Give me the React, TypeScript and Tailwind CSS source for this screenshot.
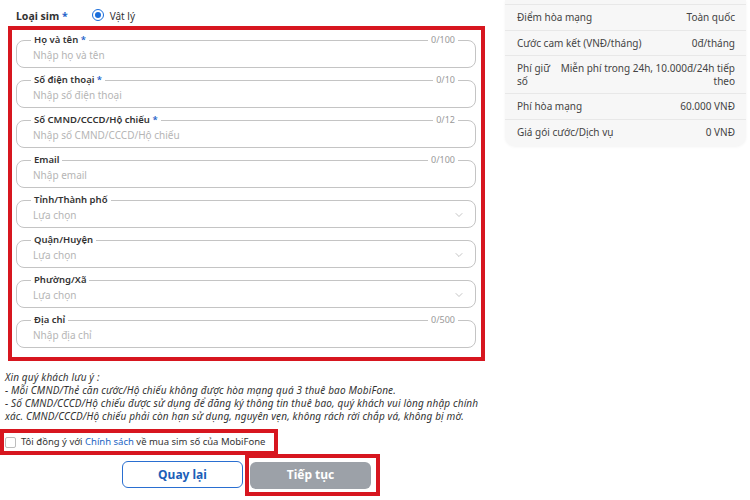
import { ChevronDown } from "lucide-react";

type Field = {
  label: string;
  required?: boolean;
  placeholder: string;
  counter?: string;
  select?: boolean;
};

const fields: Field[] = [
  { label: "Họ và tên", required: true, placeholder: "Nhập họ và tên", counter: "0/100" },
  { label: "Số điện thoại", required: true, placeholder: "Nhập số điện thoại", counter: "0/10" },
  { label: "Số CMND/CCCD/Hộ chiếu", required: true, placeholder: "Nhập số CMND/CCCD/Hộ chiếu", counter: "0/12" },
  { label: "Email", placeholder: "Nhập email", counter: "0/100" },
  { label: "Tỉnh/Thành phố", placeholder: "Lựa chọn", select: true },
  { label: "Quận/Huyện", placeholder: "Lựa chọn", select: true },
  { label: "Phường/Xã", placeholder: "Lựa chọn", select: true },
  { label: "Địa chỉ", placeholder: "Nhập địa chỉ", counter: "0/500" },
];

const summary = [
  { label: "Điểm hòa mạng", value: "Toàn quốc" },
  { label: "Cước cam kết (VNĐ/tháng)", value: "0đ/tháng" },
  { label: "Phí giữ số", value: "Miễn phí trong 24h, 10.000đ/24h tiếp theo", narrow: true },
  { label: "Phí hòa mạng", value: "60.000 VNĐ" },
  { label: "Giá gói cước/Dịch vụ", value: "0 VNĐ" },
];

function FormField({ field }: { field: Field }) {
  return (
    <div className="relative">
      <fieldset className="rounded-[8px] border border-[#c4c4c4] pb-[3px]">
        <legend className="ml-[14px] px-[3px] text-[9.5px] font-semibold leading-[12px] text-[#333]">
          {field.label}
          {field.required && <span className="text-[#2563c9]"> *</span>}
        </legend>
        {field.select ? (
          <div className="flex h-[18px] items-center justify-between pl-[16px] pr-[10px]">
            <span className="text-[10px] text-[#b5b5b5]">{field.placeholder}</span>
            <ChevronDown size={12} strokeWidth={1.4} className="text-[#aaa]" />
          </div>
        ) : (
          <input
            className="block h-[18px] w-full bg-transparent pl-[16px] text-[10px] outline-none placeholder:text-[#b5b5b5]"
            placeholder={field.placeholder}
          />
        )}
      </fieldset>
      {field.counter && (
        <span className="absolute right-[18px] top-0 bg-white px-[3px] text-[9px] leading-[12px] text-[#999]">
          {field.counter}
        </span>
      )}
    </div>
  );
}

export default function App() {
  return (
    <div
      className="flex h-[500px] w-[750px] overflow-hidden bg-white text-[#333]"
      style={{ fontFamily: '"Noto Sans", "Liberation Sans", sans-serif' }}
    >
      {/* left: form */}
      <div className="w-[490px] shrink-0">
        <div className="flex h-[26px] items-start pl-[16px] pt-[9px]">
          <span className="text-[10.5px] font-bold leading-[14px]">
            Loại sim <span className="text-[#2563c9]">*</span>
          </span>
          <label className="ml-[24px] flex items-center gap-[6px] text-[10px] leading-[14px]">
            <span className="-mt-[2px] flex h-[12px] w-[12px] items-center justify-center rounded-full border-[1.5px] border-[#1a6ddb]">
              <span className="h-[6px] w-[6px] rounded-full bg-[#1a6ddb]" />
            </span>
            Vật lý
          </label>
        </div>

        <div className="ml-[8px] flex w-[477px] flex-col gap-[6px] border-4 border-[#d7161f] pb-[9px] pl-[4px] pr-[5px] pt-[4px]">
          {fields.map((f) => (
            <FormField key={f.label} field={f} />
          ))}
        </div>

        <div className="mt-[10px] whitespace-nowrap pl-[5px] text-[10px] italic leading-[13px] tracking-[0.15px] text-[#333]">
          Xin quý khách lưu ý :
          <br />- Mỗi CMND/Thẻ căn cước/Hộ chiếu không được hòa mạng quá 3 thuê bao MobiFone.
          <br />- Số CMND/CCCD/Hộ chiếu được sử dụng để đăng ký thông tin thuê bao, quý khách vui lòng nhập chính
          <br />
          xác. CMND/CCCD/Hộ chiếu phải còn hạn sử dụng, nguyên vẹn, không rách rời chắp vá, không bị mờ.
        </div>

        <div className="mt-[6px] flex h-[26px] w-[278px] items-center gap-[5px] border-4 border-[#d7161f] pl-[1px] text-[9.5px]">
          <span className="h-[11px] w-[11px] shrink-0 rounded-[2px] border border-[#bdbdbd] bg-white" />
          <span className="whitespace-nowrap">
            Tôi đồng ý với <span className="text-[#1b64c3]">Chính sách</span> về mua sim số của MobiFone
          </span>
        </div>

        <div className="-mt-[1px] flex items-start gap-[2px] pl-[122px]">
          <button className="mt-[7px] h-[27px] w-[121px] rounded-[6px] border-[1.5px] border-[#2a6fd1] text-[12px] font-bold text-[#1c5fb8]">
            Quay lại
          </button>
          <div className="h-[42px] border-4 border-[#d7161f] pl-[1px] pr-[5px] pt-[3px]">
            <button className="h-[27px] w-[121px] rounded-[6px] bg-[#9ca1a8] text-[12px] font-bold text-white">
              Tiếp tục
            </button>
          </div>
        </div>
      </div>

      {/* right: summary */}
      <div className="ml-[15px] w-[241px]">
        <div className="rounded-b-[10px] bg-[#f7f7f7] pb-[2px] pt-[4px] shadow-[0_1px_3px_rgba(0,0,0,0.05)]">
          {summary.map((row) => (
            <div
              key={row.label}
              className="flex justify-between gap-[6px] border-t border-[#e8e8e8] py-[6px] pl-[12px] pr-[11px] text-[10px] leading-[12.5px] text-[#444]"
            >
              <span className={row.narrow ? "w-[33px] shrink-0" : ""}>{row.label}</span>
              <span className="text-right">{row.value}</span>
            </div>
          ))}
        </div>
      </div>
    </div>
  );
}
